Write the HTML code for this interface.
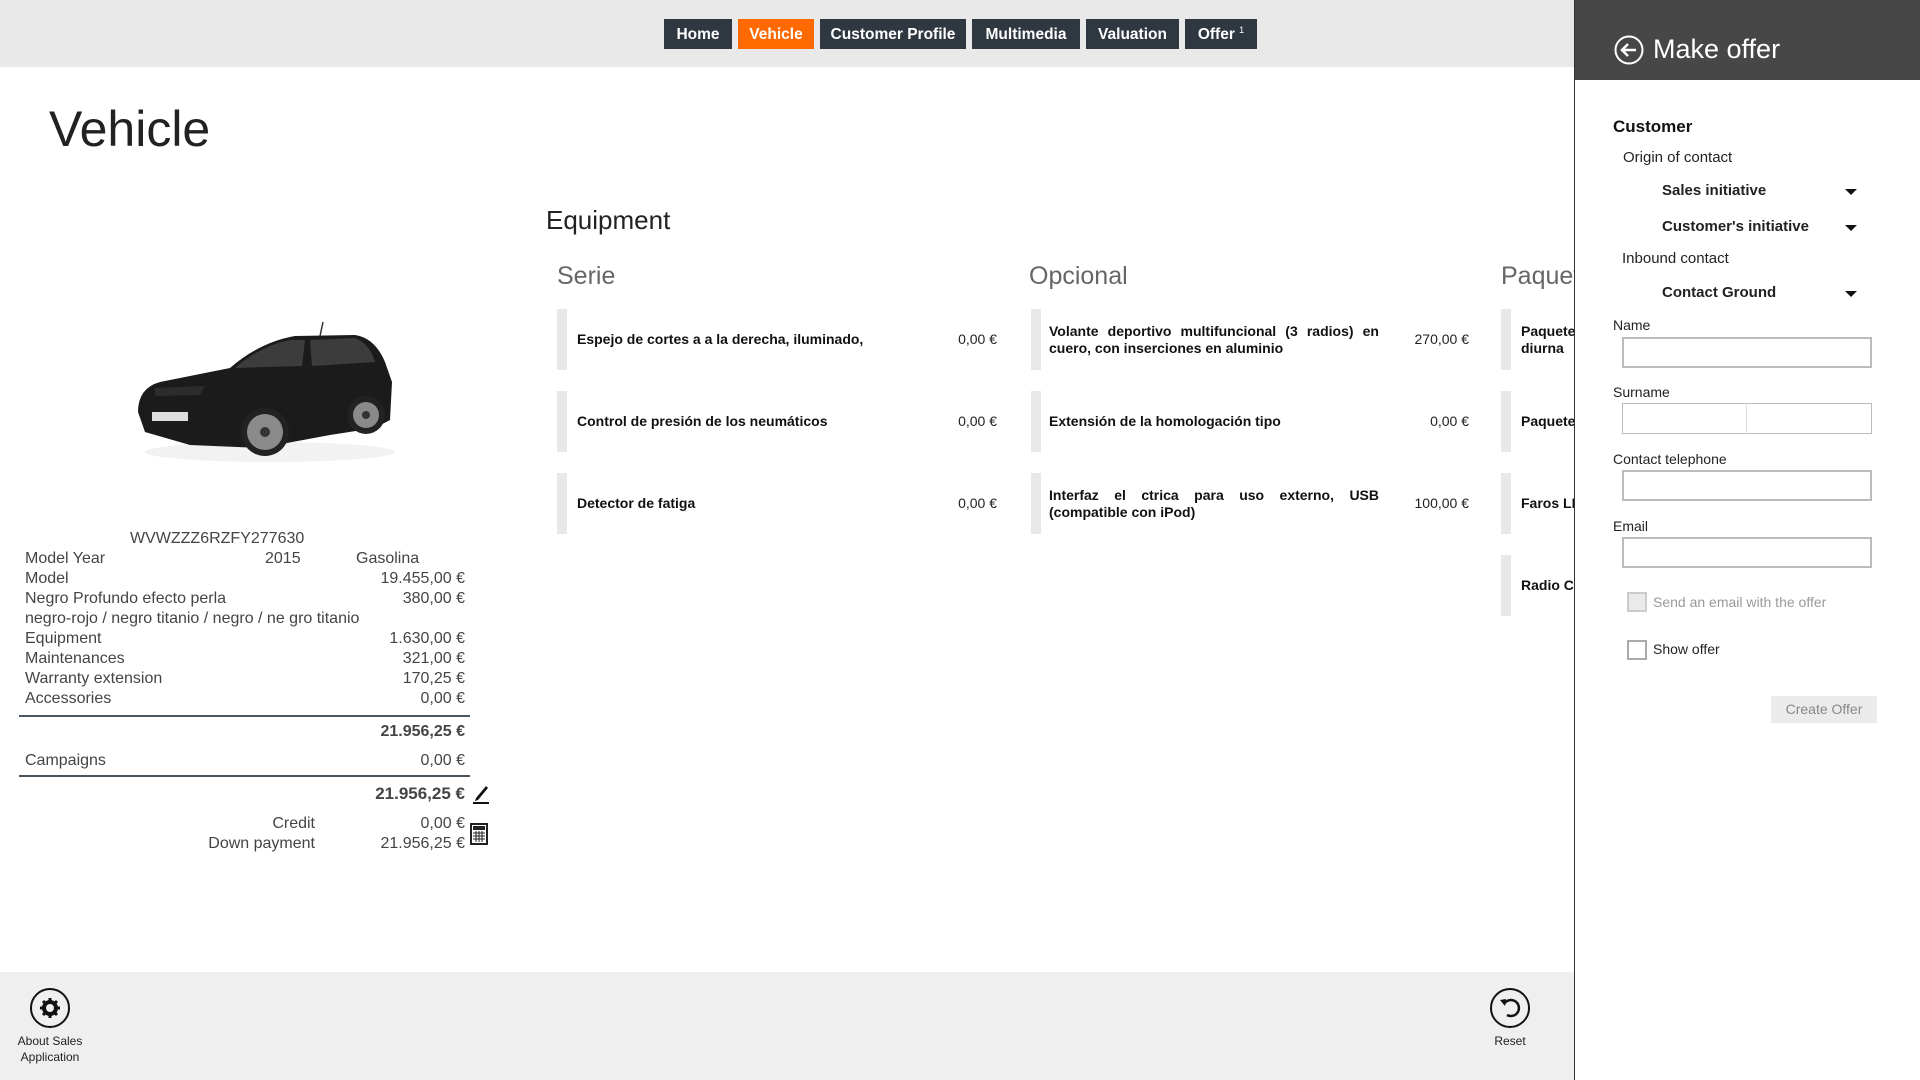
<!DOCTYPE html>
<html><head><meta charset="utf-8"><style>
*{margin:0;padding:0;box-sizing:border-box}
body{width:1920px;height:1080px;position:relative;overflow:hidden;background:#fff;font-family:"Liberation Sans",sans-serif;color:#222}
.a{position:absolute;white-space:nowrap}
.top{position:absolute;left:0;top:0;width:1574px;height:67px;background:#e9e9e9}
.nav{position:absolute;top:19px;height:30px;background:#2f3740;color:#fff;font-size:15.5px;font-weight:bold;text-align:center;line-height:32px}
.l{font-size:16px;color:#444;line-height:20px}
.bar{position:absolute;width:10px;height:61px;background:#e8e8e8}
.ct{position:absolute;font-size:14px;font-weight:bold;color:#111;line-height:17px}
.pr{position:absolute;font-size:14px;color:#222;text-align:right;width:100px}
.lbl{position:absolute;font-size:14px;color:#222}
.box{position:absolute;border:2px solid #bbb;height:31px;width:250px;left:1622px}
.arr{position:absolute;left:1845px;width:0;height:0;border-left:6px solid transparent;border-right:6px solid transparent;border-top:6px solid #111}
</style></head><body>
<div class="top"></div>
<div class="nav" style="left:664px;width:68px">Home</div>
<div class="nav" style="left:738px;width:76px;background:#ff6a00">Vehicle</div>
<div class="nav" style="left:820px;width:146px">Customer Profile</div>
<div class="nav" style="left:972px;width:108px">Multimedia</div>
<div class="nav" style="left:1086px;width:93px">Valuation</div>
<div class="nav" style="left:1185px;width:72px">Offer <span style="font-size:9px;font-weight:normal;position:relative;top:-6px">1</span></div>

<div class="a" style="left:49px;top:100px;font-size:50px;color:#222;font-weight:300">Vehicle</div>
<div class="a" style="left:546px;top:205px;font-size:26px;color:#222">Equipment</div>
<div class="a" style="left:557px;top:262px;font-size:25px;color:#666">Serie</div>
<div class="a" style="left:1029px;top:262px;font-size:25px;color:#666">Opcional</div>
<div class="a" style="left:1501px;top:262px;font-size:25px;color:#666">Paquetes</div>

<!-- car -->
<svg class="a" style="left:130px;top:320px" width="270" height="150" viewBox="0 0 270 150">
<ellipse cx="140" cy="132" rx="125" ry="10" fill="#f2f2f2"/>
<path d="M8 92 Q8 68 30 62 L100 48 Q130 22 165 16 L225 15 Q245 18 255 42 L262 62 L260 100 L245 108 L200 115 L130 128 L60 125 L15 112 Z" fill="#1b1b1b"/>
<path d="M105 48 Q130 26 160 20 L175 20 L172 46 Z M180 20 L225 18 Q240 24 245 42 L182 46 Z" fill="#3c3c3c"/>
<path d="M25 68 L75 66 L70 75 L25 76 Z" fill="#2c2c2c"/>
<rect x="22" y="92" width="36" height="9" fill="#ddd"/>
<circle cx="135" cy="112" r="24" fill="#222"/><circle cx="135" cy="112" r="18" fill="#8a8a8a"/><circle cx="135" cy="112" r="5" fill="#333"/>
<circle cx="236" cy="95" r="19" fill="#222"/><circle cx="236" cy="95" r="13" fill="#8a8a8a"/><circle cx="236" cy="95" r="4" fill="#333"/>
<line x1="190" y1="16" x2="193" y2="2" stroke="#333" stroke-width="1.5"/>
</svg>

<div class="a l" style="left:130px;top:529px">WVWZZZ6RZFY277630</div>
<div class="a l" style="left:25px;top:549px">Model Year</div>
<div class="a l" style="left:265px;top:549px">2015</div>
<div class="a l" style="left:356px;top:549px">Gasolina</div>
<div class="a l" style="left:25px;top:569px">Model</div><div class="a l" style="right:1455px;top:569px">19.455,00 €</div>
<div class="a l" style="left:25px;top:589px">Negro Profundo efecto perla</div><div class="a l" style="right:1455px;top:589px">380,00 €</div>
<div class="a l" style="left:25px;top:609px">negro-rojo / negro titanio / negro / ne gro titanio</div>
<div class="a l" style="left:25px;top:629px">Equipment</div><div class="a l" style="right:1455px;top:629px">1.630,00 €</div>
<div class="a l" style="left:25px;top:649px">Maintenances</div><div class="a l" style="right:1455px;top:649px">321,00 €</div>
<div class="a l" style="left:25px;top:669px">Warranty extension</div><div class="a l" style="right:1455px;top:669px">170,25 €</div>
<div class="a l" style="left:25px;top:689px">Accessories</div><div class="a l" style="right:1455px;top:689px">0,00 €</div>
<div class="a" style="left:19px;top:715px;width:451px;height:2px;background:#4a5560"></div>
<div class="a l" style="right:1455px;top:722px;font-weight:bold">21.956,25 €</div>
<div class="a l" style="left:25px;top:751px">Campaigns</div><div class="a l" style="right:1455px;top:751px">0,00 €</div>
<div class="a" style="left:19px;top:775px;width:451px;height:2px;background:#4a5560"></div>
<div class="a l" style="right:1455px;top:784px;font-weight:bold;font-size:17px">21.956,25 €</div>
<svg class="a" style="left:472px;top:783px" width="18" height="22"><path d="M4 15 L14 3 L16 5 L6 17 L3 18 Z" fill="#111"/><rect x="1" y="19" width="16" height="2" fill="#111"/></svg>
<div class="a l" style="right:1605px;top:814px">Credit</div><div class="a l" style="right:1455px;top:814px">0,00 €</div>
<div class="a l" style="right:1605px;top:834px">Down payment</div><div class="a l" style="right:1455px;top:834px">21.956,25 €</div>
<svg class="a" style="left:470px;top:823px" width="18" height="22"><rect x="1" y="1" width="16" height="20" fill="none" stroke="#222" stroke-width="2"/><rect x="3" y="3" width="12" height="4" fill="#222"/><path d="M3 10h12M3 13h12M3 16h12M6 8v11M9 8v11M12 8v11" stroke="#222" stroke-width="1"/></svg>

<!-- cards -->
<div class="bar" style="left:557px;top:309px"></div><div class="bar" style="left:557px;top:391px"></div><div class="bar" style="left:557px;top:473px"></div>
<div class="bar" style="left:1031px;top:309px"></div><div class="bar" style="left:1031px;top:391px"></div><div class="bar" style="left:1031px;top:473px"></div>
<div class="bar" style="left:1501px;top:309px"></div><div class="bar" style="left:1501px;top:391px"></div><div class="bar" style="left:1501px;top:473px"></div><div class="bar" style="left:1501px;top:555px"></div>
<div class="ct" style="left:577px;top:331px">Espejo de cortes a a la derecha, iluminado,</div>
<div class="pr" style="left:897px;top:331px">0,00 €</div>
<div class="ct" style="left:577px;top:413px">Control de presión de los neumáticos</div>
<div class="pr" style="left:897px;top:413px">0,00 €</div>
<div class="ct" style="left:577px;top:495px">Detector de fatiga</div>
<div class="pr" style="left:897px;top:495px">0,00 €</div>
<div class="ct" style="left:1049px;top:323px;width:330px;text-align:justify;text-align-last:left">Volante deportivo multifuncional (3 radios) en cuero, con inserciones en aluminio</div>
<div class="pr" style="left:1369px;top:331px">270,00 €</div>
<div class="ct" style="left:1049px;top:413px">Extensión de la homologación tipo</div>
<div class="pr" style="left:1369px;top:413px">0,00 €</div>
<div class="ct" style="left:1049px;top:487px;width:330px;text-align:justify;text-align-last:left">Interfaz el ctrica para uso externo, USB (compatible con iPod)</div>
<div class="pr" style="left:1369px;top:495px">100,00 €</div>
<div class="ct" style="left:1521px;top:323px">Paquete luz<br>diurna</div>
<div class="ct" style="left:1521px;top:413px">Paquete</div>
<div class="ct" style="left:1521px;top:495px">Faros LED</div>
<div class="ct" style="left:1521px;top:577px">Radio Composition</div>

<!-- bottom -->
<div class="a" style="left:0;top:972px;width:1574px;height:108px;background:#efefef"></div>
<svg class="a" style="left:29px;top:987px" width="42" height="42"><circle cx="21" cy="21" r="19" fill="none" stroke="#111" stroke-width="2"/><circle cx="21" cy="21" r="6" fill="none" stroke="#111" stroke-width="4"/><path d="M21 11v4M21 27v4M11 21h4M27 21h4M14 14l3 3M25 25l3 3M14 28l3-3M25 17l3-3" stroke="#111" stroke-width="3"/></svg>
<div class="a" style="left:0;top:1033px;width:100px;text-align:center;font-size:12px;line-height:16px;color:#222">About Sales<br>Application</div>
<svg class="a" style="left:1489px;top:987px" width="42" height="42"><circle cx="21" cy="21" r="19" fill="none" stroke="#111" stroke-width="2"/><path d="M15 17 A8 8 0 1 1 18 28" fill="none" stroke="#111" stroke-width="2.5"/><path d="M11 13 L17 12 L16 19 Z" fill="#111"/></svg>
<div class="a" style="left:1480px;top:1034px;width:60px;text-align:center;font-size:12px;color:#222">Reset</div>

<!-- right panel -->
<div class="a" style="left:1574px;top:0;width:346px;height:1080px;background:#fff;border-left:1px solid #333"></div>
<div class="a" style="left:1575px;top:0;width:345px;height:80px;background:#474747"></div>
<svg class="a" style="left:1614px;top:35px" width="30" height="30"><circle cx="15" cy="15" r="13.5" fill="none" stroke="#fff" stroke-width="2"/><path d="M22 15H9M14 9L8 15L14 21" fill="none" stroke="#fff" stroke-width="2.5"/></svg>
<div class="a" style="left:1653px;top:34px;font-size:27px;color:#fff;font-weight:300">Make offer</div>
<div class="a" style="left:1613px;top:117px;font-size:17px;font-weight:bold;color:#111">Customer</div>
<div class="lbl" style="left:1623px;top:149px;font-size:15px">Origin of contact</div>
<div class="lbl" style="left:1662px;top:182px;font-size:15px;font-weight:bold">Sales initiative</div><div class="arr" style="top:189px"></div>
<div class="lbl" style="left:1662px;top:218px;font-size:15px;font-weight:bold">Customer's initiative</div><div class="arr" style="top:225px"></div>
<div class="lbl" style="left:1622px;top:250px;font-size:15px">Inbound contact</div>
<div class="lbl" style="left:1662px;top:284px;font-size:15px;font-weight:bold">Contact Ground</div><div class="arr" style="top:291px"></div>
<div class="lbl" style="left:1613px;top:317px">Name</div>
<div class="box" style="top:337px"></div>
<div class="lbl" style="left:1613px;top:384px">Surname</div>
<div class="box" style="top:403px;border-width:1px"></div><div class="a" style="left:1746px;top:403px;width:1px;height:31px;background:#ddd"></div>
<div class="lbl" style="left:1613px;top:451px">Contact telephone</div>
<div class="box" style="top:470px"></div>
<div class="lbl" style="left:1613px;top:518px">Email</div>
<div class="box" style="top:537px"></div>
<div class="a" style="left:1627px;top:592px;width:20px;height:20px;border:2px solid #ccc;background:#eaeaea"></div>
<div class="lbl" style="left:1653px;top:594px;color:#999">Send an email with the offer</div>
<div class="a" style="left:1627px;top:640px;width:20px;height:20px;border:2px solid #aaa"></div>
<div class="lbl" style="left:1653px;top:641px">Show offer</div>
<div class="a" style="left:1771px;top:696px;width:106px;height:27px;background:#ebebeb;color:#888;font-size:14px;text-align:center;line-height:27px">Create Offer</div>
</body></html>
